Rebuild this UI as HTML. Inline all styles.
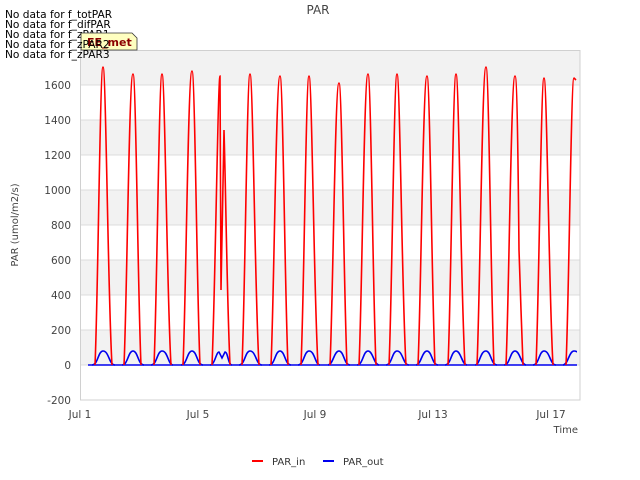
<!DOCTYPE html>
<html><head><meta charset="utf-8"><style>
body{margin:0;background:#fff;}
svg{display:block;font-family:"DejaVu Sans","Liberation Sans",sans-serif;}
</style></head><body>
<svg width="640" height="480" viewBox="0 0 640 480">
<rect x="81" y="50" width="499" height="350" fill="#fff"/>
<g fill="#f2f2f2">
<rect x="81" y="50" width="499" height="35"/>
<rect x="81" y="120" width="499" height="35"/>
<rect x="81" y="190" width="499" height="35"/>
<rect x="81" y="260" width="499" height="35"/>
<rect x="81" y="330" width="499" height="35"/>
</g>
<g stroke="#dcdcdc" stroke-width="1">
<line x1="81" y1="85" x2="580" y2="85"/><line x1="81" y1="120" x2="580" y2="120"/>
<line x1="81" y1="155" x2="580" y2="155"/><line x1="81" y1="190" x2="580" y2="190"/>
<line x1="81" y1="225" x2="580" y2="225"/><line x1="81" y1="260" x2="580" y2="260"/>
<line x1="81" y1="295" x2="580" y2="295"/><line x1="81" y1="330" x2="580" y2="330"/>
<line x1="81" y1="365" x2="580" y2="365"/>
</g>
<rect x="80.5" y="50.5" width="499.5" height="349.5" fill="none" stroke="#d0d0d0"/>
<g fill="#444" font-size="10.5" text-anchor="end">
<text x="71" y="89">1600</text><text x="71" y="124">1400</text><text x="71" y="159">1200</text>
<text x="71" y="194">1000</text><text x="71" y="229">800</text><text x="71" y="264">600</text>
<text x="71" y="299">400</text><text x="71" y="334">200</text><text x="71" y="369">0</text>
<text x="71" y="404">-200</text>
</g>
<g fill="#444" font-size="10.5" text-anchor="middle">
<text x="80" y="418">Jul 1</text><text x="198" y="418">Jul 5</text><text x="315" y="418">Jul 9</text>
<text x="433" y="418">Jul 13</text><text x="551" y="418">Jul 17</text>
</g>
<text x="578" y="433" font-size="10" fill="#444" text-anchor="end">Time</text>
<text x="18" y="225" font-size="10" fill="#444" text-anchor="middle" transform="rotate(-90 18 225)">PAR (umol/m2/s)</text>
<text x="318" y="14" font-size="12" fill="#444" text-anchor="middle">PAR</text>
<defs><clipPath id="c"><rect x="81" y="50" width="496" height="350"/></clipPath></defs>
<g clip-path="url(#c)" fill="none" stroke-width="1.6">
<path stroke="#0000ee" d="M88 365H578"/>
<g stroke="#0000ee">
<path d="M92 365C98 365 98 351 103 351C109 351 109 365 115 365"/>
<path d="M122 365C128 365 128 351 133 351C138 351 138 365 144 365"/>
<path d="M151 365C157 365 157 351 162 351C168 351 168 365 173 365"/>
<path d="M181 365C187 365 187 351 192 351C197 351 197 365 203 365"/>
<path d="M210 365C215 365 216 352 219 352L222 358L225 352C228 352 228 365 232 365"/>
<path d="M239 365C245 365 245 351 250 351C256 351 256 365 262 365"/>
<path d="M269 365C275 365 275 351 280 351C285 351 285 365 291 365"/>
<path d="M298 365C304 365 304 351 309 351C315 351 315 365 320 365"/>
<path d="M328 365C333 365 334 351 339 351C344 351 344 365 350 365"/>
<path d="M357 365C363 365 363 351 368 351C373 351 374 365 379 365"/>
<path d="M386 365C392 365 392 351 397 351C403 351 403 365 409 365"/>
<path d="M416 365C421 365 422 351 427 351C432 351 432 365 438 365"/>
<path d="M445 365C451 365 451 351 456 351C461 351 462 365 467 365"/>
<path d="M475 365C480 365 480 351 486 351C491 351 491 365 497 365"/>
<path d="M504 365C510 365 510 351 515 351C520 351 521 365 526 365"/>
<path d="M533 365C539 365 539 351 544 351C550 351 550 365 556 365"/>
<path d="M563 365C568 365 569 351 574 351C576 351 577 352 578 352"/>
</g>
<g stroke="#ff0000">
<path d="M95 365C98 300 100 67 103 67C106 67 108 300 112 365"/>
<path d="M124 365C127 300 129 74 133 74C136 74 138 300 141 365"/>
<path d="M154 365C157 300 159 74 162 74C165 74 167 300 171 365"/>
<path d="M183 365C186 300 188 71 192 71C195 71 197 300 200 365"/>
<path d="M212 365C215 300 218 76 220 76L221 290L224 130C226 200 227 300 230 365"/>
<path d="M242 365C245 300 247 74 250 74C253 74 255 300 259 365"/>
<path d="M271 365C274 300 276 76 280 76C283 76 285 300 288 365"/>
<path d="M301 365C304 300 306 76 309 76C312 76 314 300 318 365"/>
<path d="M330 365C333 300 335 83 339 83C342 83 344 300 347 365"/>
<path d="M359 365C362 300 364 74 368 74C371 74 373 300 376 365"/>
<path d="M389 365C392 300 394 74 397 74C400 74 402 300 406 365"/>
<path d="M418 365C421 300 423 76 427 76C430 76 432 300 435 365"/>
<path d="M448 365C451 300 453 74 456 74C459 74 461 300 465 365"/>
<path d="M477 365C480 300 482 67 486 67C489 67 491 300 494 365"/>
<path d="M506 365C509 300 511 76 515 76C517 76 518 150 519 250L521 310L523 365"/>
<path d="M536 365C539 300 541 78 544 78C547 78 549 300 553 365"/>
<path d="M566 365C569 300 571 78 574 78L576 80"/>
</g>
</g>
<g font-size="10.6" fill="#000">
<text x="5" y="18">No data for f_totPAR</text>
<text x="5" y="28">No data for f_difPAR</text>
<text x="5" y="38">No data for f_zPAR1</text>
<path d="M81 33H132L137 38V50H81Z" fill="#ffffc0" stroke="#333" stroke-width="0.8"/>
<text x="87" y="46" font-weight="bold" fill="#8b0000" font-size="11">EE_met</text>
<text x="5" y="48">No data for f_zPAR2</text>
<text x="5" y="58">No data for f_zPAR3</text>
</g>
<line x1="252" y1="461" x2="263" y2="461" stroke="#ff0000" stroke-width="2"/>
<text x="272" y="465" font-size="10" fill="#333">PAR_in</text>
<line x1="323" y1="461" x2="334" y2="461" stroke="#0000ee" stroke-width="2"/>
<text x="343" y="465" font-size="10" fill="#333">PAR_out</text>
</svg>
</body></html>
